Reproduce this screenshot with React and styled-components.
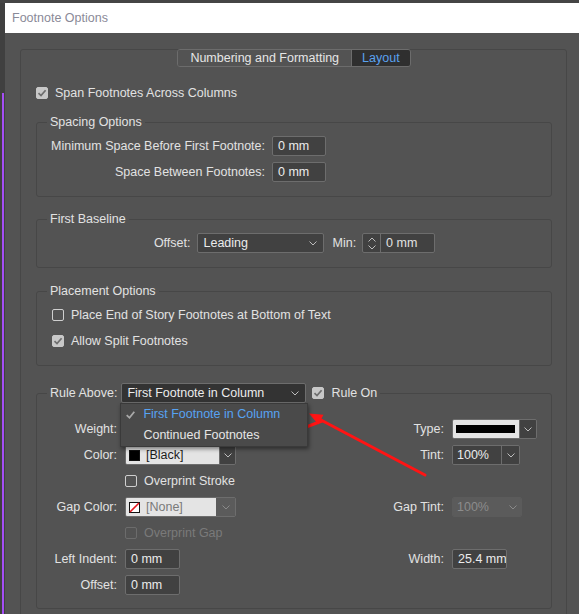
import React from 'react';
import styled, { createGlobalStyle } from 'styled-components';

const GlobalStyle = createGlobalStyle`
  html, body { margin: 0; padding: 0; background: #3d3d3d; }
  body {
    font-family: "Liberation Sans", Arial, sans-serif;
    font-size: 12.5px;
    color: #e2e2e2;
  }
`;

const Screen = styled.div`
  position: relative;
  width: 579px;
  height: 614px;
  overflow: hidden;
  display: flex;
  flex-direction: column;
  background: #3d3d3d;
`;

const TopStrip = styled.div`
  height: 3px;
  flex: none;
  background: #454545;
`;

const Window = styled.div`
  flex: 1;
  display: flex;
  min-height: 0;
`;

const LeftEdge = styled.div`
  width: 5px;
  flex: none;
  display: flex;
  flex-direction: column;
  padding-top: 90px;
  background: #404040;
`;

const PurpleLine = styled.div`
  flex: 1;
  width: 2px;
  margin-left: 2px;
  background: #a54ef5;
`;

const Dialog = styled.div`
  flex: 1;
  display: flex;
  flex-direction: column;
  min-width: 0;
`;

const TitleBar = styled.div`
  height: 30px;
  flex: none;
  display: flex;
  align-items: center;
  padding-left: 7px;
  background: #ffffff;
  color: #8a8a98;
`;

const Body = styled.div`
  flex: 1;
  background: #535353;
  padding: 16px 12px 0 15px;
`;

const Panel = styled.div`
  border: 1px solid #474747;
  border-radius: 3px;
  height: 620px;
  padding: 0 14px 0 15px;
`;

const TabBar = styled.div`
  display: flex;
  justify-content: center;
  margin-top: -1px;
`;

const Tabs = styled.div`
  display: flex;
  border: 1px solid #6c6c6c;
  border-radius: 3px;
  overflow: hidden;
`;

const Tab = styled.div`
  height: 16px;
  line-height: 16px;
  padding: 0 ${p => (p.$active ? 10 : 12)}px;
  background: ${p => (p.$active ? '#2f2f2f' : '#535353')};
  color: ${p => (p.$active ? '#5aa2f0' : '#e6e6e6')};
  & + & { border-left: 1px solid #6c6c6c; }
`;

const CheckRow = styled.label`
  display: flex;
  align-items: center;
  gap: 7px;
  height: 20px;
  color: ${p => (p.$disabled ? '#7a7a7a' : '#e2e2e2')};
`;

const Box = styled.span`
  width: 12px;
  height: 12px;
  flex: none;
  box-sizing: border-box;
  border-radius: 2px;
  display: flex;
  align-items: center;
  justify-content: center;
  background: ${p => (p.$checked ? '#c8c8c8' : 'transparent')};
  border: 1px solid ${p => (p.$checked ? '#c8c8c8' : p.$disabled ? '#6c6c6c' : '#cfcfcf')};
`;

const SpanRow = styled(CheckRow)`
  margin-top: 16px;
`;

const Group = styled.fieldset`
  margin: ${p => p.$top || 14}px 0 0;
  padding: 0;
  border: 1px solid #474747;
  border-radius: 3px;
  min-width: 0;
`;

const Legend = styled.legend`
  margin-left: 10px;
  padding: 0 3px;
  line-height: 16px;
`;

const RuleLegend = styled(Legend)`
  display: flex;
  align-items: center;
`;

const GroupInner = styled.div`
  padding: ${p => p.$pt || 6}px 14px ${p => p.$pb || 14}px 15px;
`;

const FormGrid = styled.div`
  display: grid;
  grid-template-columns: 213px 54px;
  grid-auto-rows: 20px;
  column-gap: 7px;
  row-gap: 6px;
`;

const Label = styled.span`
  justify-self: end;
  align-self: center;
  white-space: nowrap;
  grid-column: ${p => p.$col || 'auto'};
`;

const Input = styled.div`
  box-sizing: border-box;
  width: ${p => p.$w || 54}px;
  height: 20px;
  padding-left: 5px;
  line-height: 18px;
  background: #414141;
  border: 1px solid #6d6d6d;
  border-radius: 2px;
  white-space: nowrap;
  overflow: hidden;
  color: #ececec;
  justify-self: start;
  grid-column: ${p => p.$col || 'auto'};
`;

const CenterRow = styled.div`
  display: flex;
  justify-content: center;
  align-items: center;
  height: 20px;
`;

const Select = styled.div`
  position: relative;
  box-sizing: border-box;
  display: flex;
  align-items: center;
  justify-content: space-between;
  width: ${p => p.$w}px;
  height: 20px;
  margin-left: ${p => p.$ml || 0}px;
  padding: 0 6px 0 5px;
  background: ${p => (p.$open ? '#333333' : '#414141')};
  border: 1px solid #6d6d6d;
  border-radius: 2px;
  color: #ececec;
  white-space: nowrap;
`;

const InlineLabel = styled.span`
  margin-left: ${p => p.$ml || 0}px;
`;

const Spinner = styled.div`
  box-sizing: border-box;
  display: flex;
  width: 73px;
  height: 20px;
  margin-left: 6px;
  background: #414141;
  border: 1px solid #6d6d6d;
  border-radius: 2px;
`;

const SpinArrows = styled.div`
  width: 17px;
  flex: none;
  border-right: 1px solid #6d6d6d;
  display: flex;
  flex-direction: column;
  align-items: center;
  justify-content: center;
  gap: 3px;
`;

const SpinValue = styled.span`
  padding-left: 5px;
  line-height: 18px;
`;

const Menu = styled.div`
  position: absolute;
  z-index: 5;
  left: -2px;
  top: 19px;
  width: 186px;
  background: #4a4a4a;
  border: 1px solid #3a3a3a;
  box-shadow: 1px 2px 4px rgba(0, 0, 0, 0.45);
`;

const MenuItem = styled.div`
  position: relative;
  height: 21px;
  line-height: 21px;
  padding-left: 22px;
  color: ${p => (p.$selected ? '#57a3f3' : '#e6e6e6')};
`;

const MenuCheck = styled.svg`
  position: absolute;
  left: 4px;
  top: 6px;
`;

const RuleGrid = styled.div`
  display: grid;
  grid-template-columns: 65px 1fr 80px 85px;
  grid-auto-rows: 20px;
  column-gap: 8px;
  row-gap: 6px;
`;

const Combo = styled.div`
  box-sizing: border-box;
  display: flex;
  width: ${p => p.$w}px;
  height: 20px;
  border: 1px solid ${p => (p.$disabled ? '#5b5b5b' : '#6d6d6d')};
  border-radius: 2px;
  overflow: hidden;
  justify-self: start;
  grid-column: ${p => p.$col || 'auto'};
`;

const ComboField = styled.div`
  flex: 1;
  display: flex;
  align-items: center;
  gap: 6px;
  padding-left: ${p => (p.$light ? 3 : 4)}px;
  background: ${p => (p.$light ? '#e4e4e4' : p.$disabled ? '#5b5b5b' : '#414141')};
  color: ${p => (p.$light ? (p.$muted ? '#7a7a7a' : '#1b1b1b') : p.$disabled ? '#8c8c8c' : '#ececec')};
  white-space: nowrap;
  overflow: hidden;
`;

const ComboButton = styled.div`
  width: ${p => p.$w || 15}px;
  flex: none;
  display: flex;
  align-items: center;
  justify-content: center;
  background: ${p => (p.$disabled ? '#5b5b5b' : '#414141')};
  border-left: 1px solid ${p => (p.$disabled ? '#5b5b5b' : '#6d6d6d')};
`;

const Swatch = styled.span`
  width: 11px;
  height: 11px;
  flex: none;
  box-sizing: border-box;
  border: 1px solid #111;
  background: #000;
`;

const StrokeBar = styled.span`
  flex: 1;
  height: 8px;
  margin-right: 4px;
  background: #000;
`;

const CheckCell = styled(CheckRow)`
  grid-column: 2 / 4;
`;

const Annotation = styled.svg`
  position: absolute;
  left: 0;
  top: 0;
  pointer-events: none;
`;

const Chevron = ({ color = '#bdbdbd', up }) => (
  <svg width="8" height="5" viewBox="0 0 8 5">
    <path d={up ? 'M0.5 4.5 L4 1 L7.5 4.5' : 'M0.5 0.5 L4 4 L7.5 0.5'} fill="none" stroke={color} strokeWidth="1" />
  </svg>
);

const Tick = ({ color = '#6e6e6e', size = 10 }) => (
  <svg width={size} height={size} viewBox="0 0 10 10">
    <path d="M1.5 5.2 L4 7.6 L8.6 2.2" fill="none" stroke={color} strokeWidth="1.7" />
  </svg>
);

const Checkbox = ({ checked, disabled, children }) => (
  <>
    <Box $checked={checked} $disabled={disabled}>{checked && <Tick />}</Box>
    {children}
  </>
);

export default function App() {
  return (
    <Screen>
      <GlobalStyle />
      <TopStrip />
      <Window>
        <LeftEdge>
          <PurpleLine />
        </LeftEdge>
        <Dialog>
          <TitleBar>Footnote Options</TitleBar>
          <Body>
            <Panel>
              <TabBar>
                <Tabs>
                  <Tab>Numbering and Formatting</Tab>
                  <Tab $active>Layout</Tab>
                </Tabs>
              </TabBar>

              <SpanRow>
                <Checkbox checked>Span Footnotes Across Columns</Checkbox>
              </SpanRow>

              <Group $top={11}>
                <Legend>Spacing Options</Legend>
                <GroupInner>
                  <FormGrid>
                    <Label>Minimum Space Before First Footnote:</Label>
                    <Input>0 mm</Input>
                    <Label>Space Between Footnotes:</Label>
                    <Input>0 mm</Input>
                  </FormGrid>
                </GroupInner>
              </Group>

              <Group>
                <Legend>First Baseline</Legend>
                <GroupInner>
                  <CenterRow>
                    <span>Offset:</span>
                    <Select $w={127} $ml={7}>
                      Leading <Chevron />
                    </Select>
                    <InlineLabel $ml={8}>Min:</InlineLabel>
                    <Spinner>
                      <SpinArrows>
                        <Chevron up />
                        <Chevron />
                      </SpinArrows>
                      <SpinValue>0 mm</SpinValue>
                    </Spinner>
                  </CenterRow>
                </GroupInner>
              </Group>

              <Group $top={15}>
                <Legend>Placement Options</Legend>
                <GroupInner>
                  <CheckRow>
                    <Checkbox>Place End of Story Footnotes at Bottom of Text</Checkbox>
                  </CheckRow>
                  <CheckRow style={{ marginTop: 6 }}>
                    <Checkbox checked>Allow Split Footnotes</Checkbox>
                  </CheckRow>
                </GroupInner>
              </Group>

              <Group $top={17}>
                <RuleLegend>
                  <span>Rule Above:</span>
                  <Select $w={185} $ml={4} $open>
                    First Footnote in Column <Chevron />
                    <Menu>
                      <MenuItem $selected>
                        <MenuCheck width="11" height="10" viewBox="0 0 10 10">
                          <path d="M1.2 5.2 L4 7.8 L8.8 1.8" fill="none" stroke="#a9a9a9" strokeWidth="1.8" />
                        </MenuCheck>
                        First Footnote in Column
                      </MenuItem>
                      <MenuItem>Continued Footnotes</MenuItem>
                    </Menu>
                  </Select>
                  <CheckRow as="span" style={{ marginLeft: 6 }}>
                    <Checkbox checked>Rule On</Checkbox>
                  </CheckRow>
                </RuleLegend>
                <GroupInner $pt={16} $pb={13}>
                  <RuleGrid>
                    <Label>Weight:</Label>
                    <Combo $w={80}>
                      <ComboField />
                      <ComboButton><Chevron /></ComboButton>
                    </Combo>
                    <Label>Type:</Label>
                    <Combo $w={85}>
                      <ComboField $light><StrokeBar /></ComboField>
                      <ComboButton $w={16}><Chevron /></ComboButton>
                    </Combo>

                    <Label>Color:</Label>
                    <Combo $w={111}>
                      <ComboField $light><Swatch />[Black]</ComboField>
                      <ComboButton><Chevron /></ComboButton>
                    </Combo>
                    <Label>Tint:</Label>
                    <Combo $w={68}>
                      <ComboField>100%</ComboField>
                      <ComboButton $w={17}><Chevron /></ComboButton>
                    </Combo>

                    <CheckCell>
                      <Checkbox>Overprint Stroke</Checkbox>
                    </CheckCell>

                    <Label $col={1}>Gap Color:</Label>
                    <Combo $w={111}>
                      <ComboField $light $muted>
                        <svg width="11" height="11" viewBox="0 0 11 11">
                          <rect x="0.5" y="0.5" width="10" height="10" fill="#fff" stroke="#111" />
                          <path d="M1 10 L10 1" stroke="#e4141b" strokeWidth="1.6" />
                        </svg>
                        [None]
                      </ComboField>
                      <ComboButton $w={18} $disabled><Chevron color="#8a8a8a" /></ComboButton>
                    </Combo>
                    <Label>Gap Tint:</Label>
                    <Combo $w={70} $disabled>
                      <ComboField $disabled>100%</ComboField>
                      <ComboButton $w={17} $disabled><Chevron color="#8a8a8a" /></ComboButton>
                    </Combo>

                    <CheckCell $disabled>
                      <Checkbox disabled>Overprint Gap</Checkbox>
                    </CheckCell>

                    <Label $col={1}>Left Indent:</Label>
                    <Input $w={55}>0 mm</Input>
                    <Label>Width:</Label>
                    <Input $w={55}>25.4 mm</Input>

                    <Label $col={1}>Offset:</Label>
                    <Input $w={55}>0 mm</Input>
                  </RuleGrid>
                </GroupInner>
              </Group>
            </Panel>
          </Body>
        </Dialog>
      </Window>

      <Annotation width="579" height="614" viewBox="0 0 579 614">
        <g stroke="#ff1414" strokeWidth="3" strokeLinecap="round">
          <line x1="425" y1="475" x2="320" y2="419.5" />
          <line x1="322" y1="421" x2="285" y2="435" />
        </g>
        <g fill="#ff1414">
          <polygon points="309,413.5 323.5,414.8 318.3,424.5" />
          <polygon points="273,439.5 287.5,440 283.6,429.8" />
        </g>
      </Annotation>
    </Screen>
  );
}
